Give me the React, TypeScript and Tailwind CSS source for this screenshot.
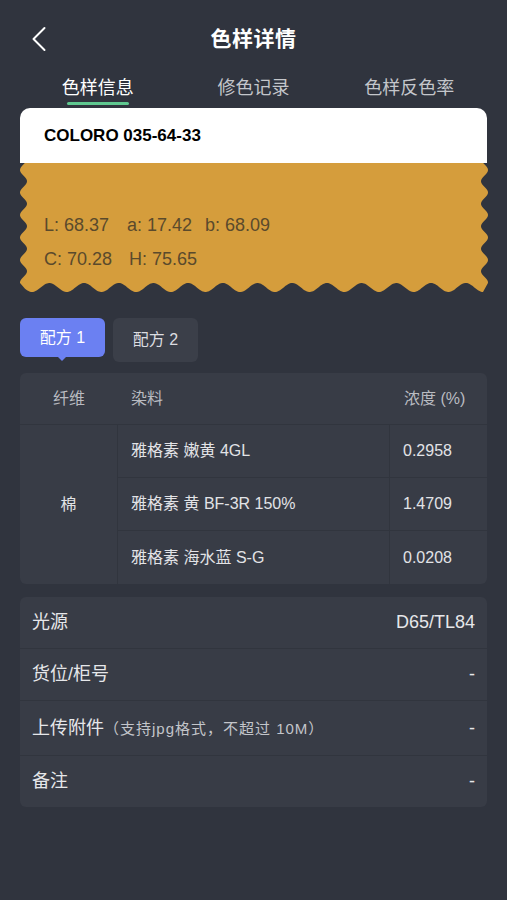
const W = 468
const H = 129

// wavy swatch outline, left/right edges have a shorter period than the bottom
const buildWave = () => {
    const lx = (y: number) => 3.5 - 3.5 * Math.cos((2 * Math.PI * (y - 7)) / 22.5)
    const by = (x: number) => H - 4.5 + 4.5 * Math.cos((2 * Math.PI * (x - 12)) / 34.7)
    const pts: string[] = []
    pts.push(`M ${lx(0).toFixed(2)} 0`)
    pts.push(`L ${(W - lx(0)).toFixed(2)} 0`)
    for (let y = 0; y <= H - 9; y += 1) pts.push(`L ${(W - lx(y)).toFixed(2)} ${y}`)
    for (let x = W - 5; x >= 5; x -= 1) pts.push(`L ${x} ${by(x).toFixed(2)}`)
    for (let y = H - 9; y >= 0; y -= 1) pts.push(`L ${lx(y).toFixed(2)} ${y}`)
    pts.push('Z')
    return pts.join(' ')
}

const dyes = [
    { name: '雅格素 嫩黄 4GL', value: '0.2958' },
    { name: '雅格素 黄 BF-3R 150%', value: '1.4709' },
    { name: '雅格素 海水蓝 S-G', value: '0.0208' },
]

const App = () => {
    const wave = buildWave()
    return (
        <div
            className="min-h-[900px] w-[507px] bg-[#30343e] pt-[11px] text-white"
            style={{ fontFamily: '"Liberation Sans", "Noto Sans CJK SC", sans-serif' }}
        >
            {/* nav bar */}
            <div className="relative flex h-[56px] items-center justify-center">
                <svg className="absolute left-[30px] top-[15px]" width="18" height="26" viewBox="0 0 18 26">
                    <path d="M14.5 2 L3.5 13 L14.5 24" fill="none" stroke="#fff" strokeWidth="2" strokeLinecap="round" strokeLinejoin="round" />
                </svg>
                <h1 className="text-[21px] font-semibold tracking-[0.5px]">色样详情</h1>
            </div>

            {/* tabs */}
            <div className="mx-[20px] grid h-[41px] grid-cols-3">
                <div className="flex flex-col items-center pt-[9px]">
                    <span className="text-[18px] leading-[24px] text-white">色样信息</span>
                    <span className="mt-[2px] h-[3px] w-[62px] rounded-full bg-[#5fc890]" />
                </div>
                <div className="flex flex-col items-center pt-[9px]">
                    <span className="text-[18px] leading-[24px] text-[#c4c6cb]">修色记录</span>
                </div>
                <div className="flex flex-col items-center pt-[9px]">
                    <span className="text-[18px] leading-[24px] text-[#c4c6cb]">色样反色率</span>
                </div>
            </div>

            {/* swatch card */}
            <div className="mx-[20px]">
                <div className="flex h-[55px] items-center rounded-t-[10px] bg-white pl-[24px]">
                    <span className="text-[17px] font-bold text-black">COLORO 035-64-33</span>
                </div>
                <div className="relative h-[129px]">
                    <svg className="absolute inset-0" width={W} height={H} viewBox={`0 0 ${W} ${H}`}>
                        <path d={wave} fill="#d59d3c" />
                    </svg>
                    <div className="relative pl-[24px] pt-[50px] text-[18px] leading-[24px] text-[#5a4a2c]">
                        <div className="flex">
                            <span className="w-[83px]">L: 68.37</span>
                            <span className="w-[78px]">a: 17.42</span>
                            <span>b: 68.09</span>
                        </div>
                        <div className="mt-[10px] flex">
                            <span className="w-[85px]">C: 70.28</span>
                            <span>H: 75.65</span>
                        </div>
                    </div>
                </div>
            </div>

            {/* formula tabs */}
            <div className="mx-[20px] mt-[26px] flex items-start gap-[8px]">
                <div className="relative flex h-[39px] w-[85px] items-center justify-center rounded-[6px] bg-[#6b80f2] text-[16px] text-white">
                    配方 1
                    <span className="absolute -bottom-[4px] left-[37px] h-0 w-0 border-x-[5px] border-t-[5px] border-x-transparent border-t-[#6b80f2]" />
                </div>
                <div className="flex h-[44px] w-[85px] items-center justify-center rounded-[6px] bg-[#3b3f49] text-[16px] text-[#dcdde0]">
                    配方 2
                </div>
            </div>

            {/* dye table */}
            <div className="mx-[20px] mt-[11px] overflow-hidden rounded-[6px] bg-[#383c46]">
                <div className="grid h-[52px] grid-cols-[98px_273px_1fr] items-center border-b border-[#31353e] text-[16px] text-[#b9bbc1]">
                    <span className="text-center">纤维</span>
                    <span className="pl-[13px]">染料</span>
                    <span className="pl-[13px]">浓度 (%)</span>
                </div>
                <div className="flex">
                    <div className="flex w-[98px] items-center justify-center border-r border-[#31353e] text-[16px] text-[#e2e3e6]">
                        棉
                    </div>
                    <div className="flex-1">
                        {dyes.map((d, i) => (
                            <div
                                key={d.value}
                                className={`grid h-[53px] grid-cols-[272px_1fr] items-center text-[16px] text-[#e2e3e6] ${
                                    i < dyes.length - 1 ? 'border-b border-[#31353e]' : ''
                                }`}
                            >
                                <span className="flex h-full items-center border-r border-[#31353e] pl-[13px]">{d.name}</span>
                                <span className="pl-[13px]">{d.value}</span>
                            </div>
                        ))}
                    </div>
                </div>
            </div>

            {/* info list */}
            <div className="mx-[20px] mt-[13px] rounded-[6px] bg-[#383c46] text-[18px] text-[#e6e7ea]">
                <div className="flex h-[52px] items-center justify-between border-b border-[#31353e] px-[12px]">
                    <span>光源</span>
                    <span>D65/TL84</span>
                </div>
                <div className="flex h-[52px] items-center justify-between border-b border-[#31353e] px-[12px]">
                    <span>货位/柜号</span>
                    <span>-</span>
                </div>
                <div className="flex h-[55px] items-center justify-between border-b border-[#31353e] px-[12px]">
                    <span>
                        上传附件
                        <span className="text-[15px] tracking-[1px] text-[#c3c5ca]">（支持jpg格式，不超过 10M）</span>
                    </span>
                    <span>-</span>
                </div>
                <div className="flex h-[51px] items-center justify-between px-[12px]">
                    <span>备注</span>
                    <span>-</span>
                </div>
            </div>
        </div>
    )
}

export default App
